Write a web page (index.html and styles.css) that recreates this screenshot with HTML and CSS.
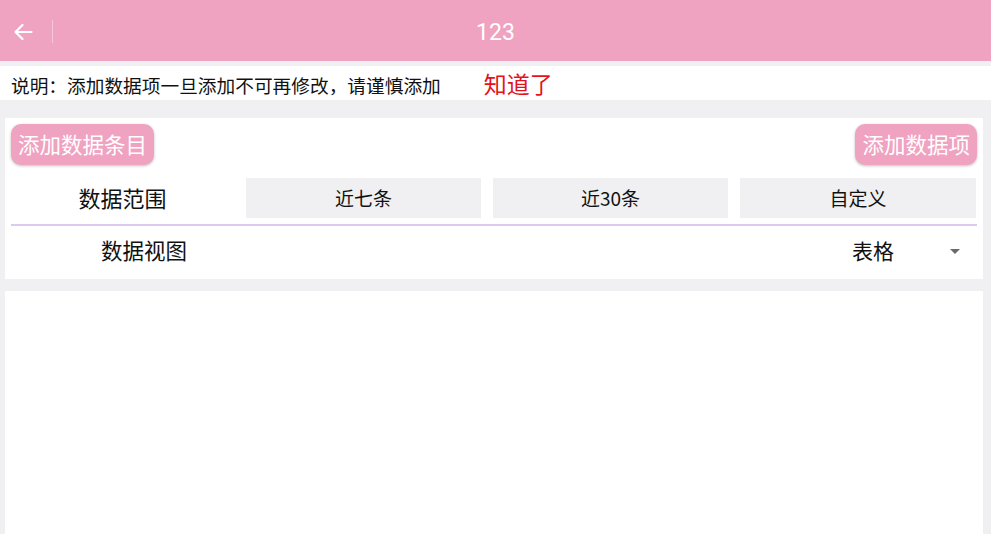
FILE: index.html
```html
<!DOCTYPE html>
<html lang="zh">
<head>
<meta charset="utf-8">
<title>123</title>
<link rel="stylesheet" href="styles.css">
</head>
<body>
<header class="topbar">
  <button class="back" aria-label="返回">
    <svg width="20" height="20" viewBox="0 0 20 20"><path d="M18.5 10H2.5M9.5 3L2.5 10 9.5 17" fill="none" stroke="#fff" stroke-width="2.2" stroke-linecap="round" stroke-linejoin="round"/></svg>
  </button>
  <span class="sep"></span>
  <h1 class="title">123</h1>
</header>
<div class="notice">
  <span class="notice-text">说明：添加数据项一旦添加不可再修改，请谨慎添加</span>
  <span class="ok">知道了</span>
</div>
<section class="card">
  <div class="actions">
    <button class="pill">添加数据条目</button>
    <button class="pill">添加数据项</button>
  </div>
  <div class="range">
    <span class="label">数据范围</span>
    <button class="seg">近七条</button>
    <button class="seg">近30条</button>
    <button class="seg">自定义</button>
  </div>
  <div class="view">
    <span class="label2">数据视图</span>
    <span class="select">表格</span>
    <span class="caret"></span>
  </div>
</section>
<section class="panel"></section>
</body>
</html>
```
FILE: styles.css
```css
html, body { margin: 0; padding: 0; }
body {
  width: 991px; height: 534px; overflow: hidden;
  background: #f0f0f2;
  font-family: "Noto Sans CJK SC", "Noto Sans", Roboto, sans-serif;
  color: #1a1a1a;
}
button { font-family: inherit; border: 0; padding: 0; margin: 0; cursor: pointer; }
.topbar {
  height: 61px; background: #f0a2c1; display: flex; align-items: center;
  position: relative;
}
.back { background: transparent; width: 20px; height: 20px; margin-left: 13px; margin-top: 2px; display: flex; }
.sep { width: 1px; height: 23px; background: #f7c6da; margin-left: 19px; margin-top: 2px; }
.title {
  position: absolute; left: 0; right: 0; top: 0; height: 61px; margin: 0; padding-top: 4px;
  box-sizing: border-box;
  display: flex; align-items: center; justify-content: center;
  font-family: Roboto, "Noto Sans", sans-serif; font-weight: 400; font-size: 23px; color: #fff;
  pointer-events: none;
}
.notice {
  margin-top: 5px; height: 34px; background: #fff; display: flex; align-items: center;
  padding-left: 11px;
}
.notice-text { font-size: 18.7px; color: #111; margin-top: 3px; }
.ok { color: #e3131b; font-size: 23px; margin-left: 43px; line-height: 1; }
.card {
  margin: 18px 8px 0 5px; background: #fff; height: 161px;
  padding: 6px 6px 0 6px; box-sizing: border-box;
}
.actions { display: flex; justify-content: space-between; height: 41px; }
.pill {
  background: #f0a2c1; color: #fff; font-size: 21.5px; border-radius: 10px;
  padding: 0 7px 2px; height: 41px; box-shadow: 0 1px 3px rgba(0,0,0,0.25);
  line-height: 39px; box-sizing: border-box;
}
.range {
  display: grid; grid-template-columns: 223px 235px 235px 236px; column-gap: 12px;
  margin-top: 13px; height: 40px; align-items: stretch;
}
.label { display: flex; align-items: center; justify-content: center; font-size: 22px; color: #111; padding-bottom: 3px; }
.seg { background: #f0f0f2; font-size: 19px; color: #111; padding-bottom: 2px; }
.view {
  margin-top: 6px; border-top: 2px solid #dccaf3; height: 51px;
  display: flex; align-items: center; padding-bottom: 2px; box-sizing: border-box;
}
.label2 { font-size: 21.5px; margin-left: 90px; color: #111; }
.select { font-size: 21px; margin-left: auto; color: #111; }
.caret {
  width: 0; height: 0; border-left: 5px solid transparent; border-right: 5px solid transparent;
  border-top: 5px solid #6a6a6a; margin-left: 56px; margin-right: 17px; margin-top: 3px;
}
.panel { margin: 12px 8px 0 5px; background: #fff; height: 260px; }
```
